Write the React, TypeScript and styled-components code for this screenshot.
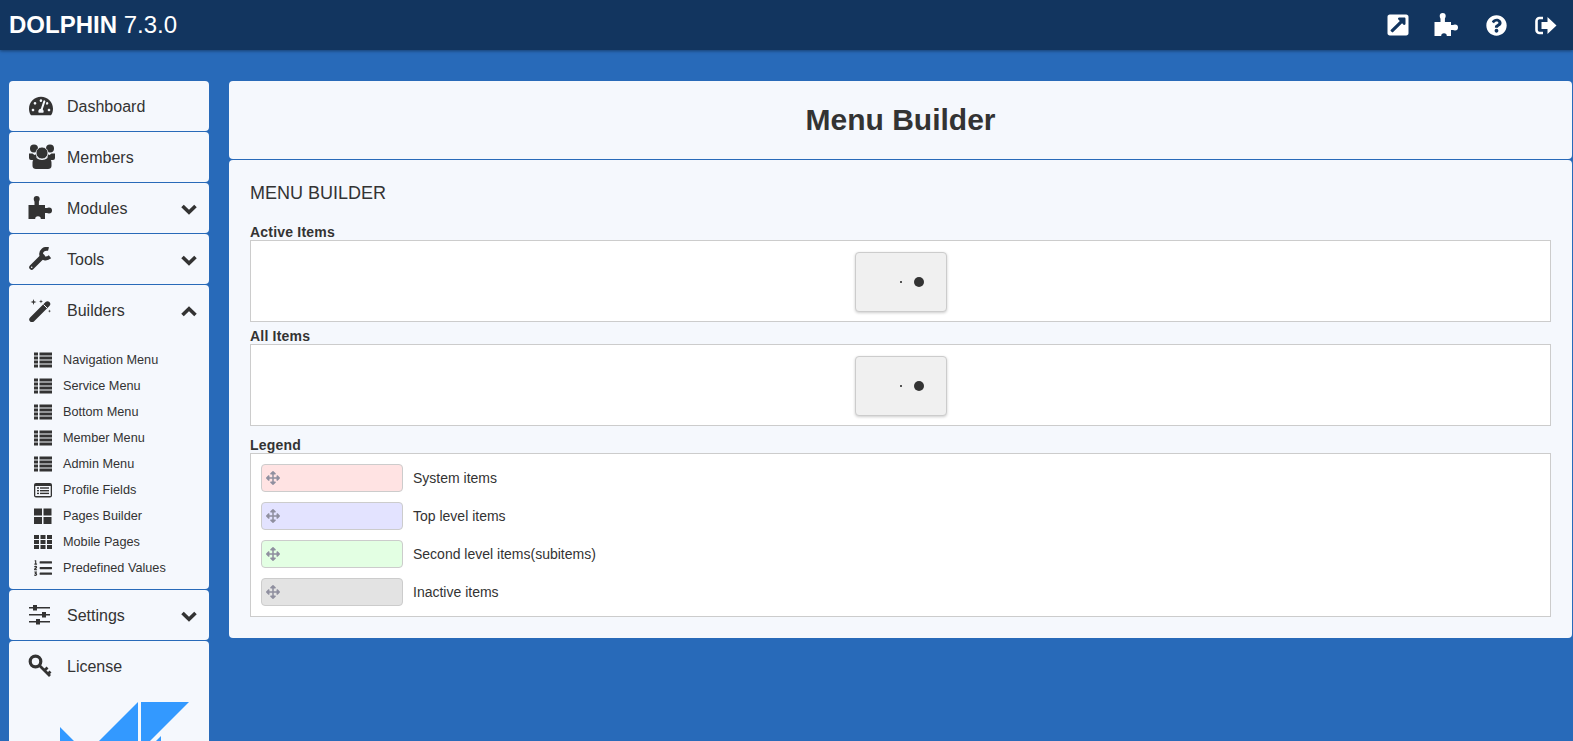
import { ReactNode } from 'react'
import styled, { createGlobalStyle } from 'styled-components'
import {
  FaArrowsAlt,
  FaExternalLinkSquareAlt,
  FaListOl,
  FaQuestionCircle,
  FaTachometerAlt,
} from 'react-icons/fa'

const GlobalStyle = createGlobalStyle`
  html, body {
    height: 741px;
    margin: 0;
    overflow: hidden;
  }
  body {
    background: #286ab9;
    color: #333;
    font-family: "Liberation Sans", Arial, sans-serif;
  }
`

const PuzzleIcon = () => (
  <svg width="24" height="24" viewBox="0 0 24 24" fill="currentColor">
    <circle cx="8.700" cy="3" r="3" />
    <circle cx="21" cy="14.500" r="3" />
    <path d="M6.500 4h4.400v5H17v3h3v5h-3v6h-4.200a2.800 2.800 0 0 0-5.600 0H.5V9h6z" />
  </svg>
)

const UsersIcon = () => (
  <svg width="28" height="26" viewBox="0 0 28 26" fill="currentColor">
    <circle cx="6" cy="4.500" r="4" />
    <circle cx="22" cy="4.500" r="4" />
    <path d="M1 9.500h3.500l2 1.500 2-1v6H3a2 2 0 0 1-2-2zM27 9.500h-3.500l-2 1.500-2-1v6h5.500a2 2 0 0 0 2-2z" />
    <circle cx="14" cy="9" r="6" stroke="#f5f8fd" strokeWidth=".8" />
    <path d="M8.500 14c3 2.500 8 2.500 11 0 2.500.5 4 2 4 4.500v3.500c0 2-1.500 3-3.500 3H8c-2 0-3.500-1-3.500-3v-3.500c0-2.500 1.500-4 4-4.500z" />
  </svg>
)

const WrenchIcon = () => (
  <svg width="24" height="24" viewBox="0 0 24 24" fill="none" stroke="currentColor">
    <path d="M20.500 2C16 .9 12.500 4 13.200 8c.7 3.500 5 4.800 8.800 1.800" strokeWidth="3.800" />
    <path d="M14.500 9.500 3.700 20.300" strokeWidth="5" strokeLinecap="round" />
    <circle cx="3.700" cy="20.300" r=".8" fill="#f5f8fd" stroke="none" />
  </svg>
)

const MagicIcon = () => (
  <svg width="24" height="24" viewBox="0 0 24 24" fill="currentColor">
    <path d="M4 21.500 19.500 6" stroke="currentColor" strokeWidth="5.400" strokeLinecap="round" />
    <path d="M15.500 6.500l3.500 3.500" stroke="#f5f8fd" strokeWidth="1" />
    <path d="M5.500 1l.7 2.300 2.300.7-2.300.7-.7 2.300-.7-2.300L2.500 4l2.300-.7zM13 1.500l.5 1.500 1.500.5-1.500.5-.5 1.500-.5-1.500-1.500-.5 1.500-.5zM21.500 11.500l.4 1.200 1.200.4-1.200.4-.4 1.200-.4-1.200-1.200-.4 1.200-.4z" />
  </svg>
)

const KeyIcon = () => (
  <svg width="24" height="24" viewBox="0 0 24 24" fill="none" stroke="currentColor">
    <circle cx="7.500" cy="7.500" r="5.300" strokeWidth="3.200" />
    <path d="M11.500 11.500 22 22M16.500 16.500l3-3M20 20l2.500-2.500" strokeWidth="2.800" />
  </svg>
)

const SlidersIcon = () => (
  <svg width="24" height="24" viewBox="0 0 24 24" fill="currentColor">
    <rect x="1" y="4" width="21" height="1.500" />
    <rect x="1" y="11" width="21" height="1.500" />
    <rect x="1" y="18" width="21" height="1.500" />
    <rect x="5" y="2" width="4" height="5.500" />
    <rect x="14" y="9" width="4" height="5.500" />
    <rect x="8" y="16" width="4" height="5.500" />
  </svg>
)

const ChevronIcon = ({ up }: { up?: boolean }) => (
  <svg width="16" height="11" viewBox="0 0 16 11" fill="none" stroke="currentColor" strokeWidth="3.600">
    <path d={up ? 'M1.500 9 8 2.700 14.500 9' : 'M1.500 2 8 8.300 14.500 2'} />
  </svg>
)

const SignOutIcon = () => (
  <svg width="22" height="19" viewBox="0 0 22 19" fill="currentColor">
    <path d="M8 2H4.500A3 3 0 0 0 1.500 5v9a3 3 0 0 0 3 3H8" fill="none" stroke="currentColor" strokeWidth="2.600" />
    <path d="M12.500 1 21.500 9.500 12.500 18V13H6.500V6h6z" />
  </svg>
)

const ListIcon = () => (
  <svg width="18" height="18" viewBox="0 0 18 18" fill="currentColor">
    {[1.500, 5.500, 9.500, 13.500].map(y => (
      <g key={y}>
        <rect x="0" y={y} width="4" height="3" />
        <rect x="5.500" y={y} width="12.500" height="3" />
      </g>
    ))}
  </svg>
)

const ListAltIcon = () => (
  <svg width="18" height="18" viewBox="0 0 18 18" fill="currentColor">
    <rect x="0" y="2" width="18" height="14.500" rx="2" />
    <rect x="1.300" y="5" width="15.400" height="10" fill="#f5f8fd" />
    {[6.300, 9, 11.700].map(y => (
      <g key={y}>
        <rect x="3" y={y} width="2" height="1.400" />
        <rect x="6" y={y} width="9" height="1.400" />
      </g>
    ))}
  </svg>
)

const ThLargeIcon = () => (
  <svg width="18" height="18" viewBox="0 0 18 18" fill="currentColor">
    <rect x="0" y="1.500" width="8" height="7" />
    <rect x="9.500" y="1.500" width="8" height="7" />
    <rect x="0" y="10" width="8" height="7" />
    <rect x="9.500" y="10" width="8" height="7" />
  </svg>
)

const ThIcon = () => (
  <svg width="18" height="18" viewBox="0 0 18 18" fill="currentColor">
    {[2, 7, 12].map(y =>
      [0, 6.500, 13].map(x => <rect key={`${x}-${y}`} x={x} y={y} width="5" height="4" />),
    )}
  </svg>
)

const subItems: [ReactNode, string][] = [
  [<ListIcon />, 'Navigation Menu'],
  [<ListIcon />, 'Service Menu'],
  [<ListIcon />, 'Bottom Menu'],
  [<ListIcon />, 'Member Menu'],
  [<ListIcon />, 'Admin Menu'],
  [<ListAltIcon />, 'Profile Fields'],
  [<ThLargeIcon />, 'Pages Builder'],
  [<ThIcon />, 'Mobile Pages'],
  [<FaListOl />, 'Predefined Values'],
]

const legend = [
  { color: '#ffe3e3', label: 'System items' },
  { color: '#e3e3ff', label: 'Top level items' },
  { color: '#e3ffe3', label: 'Second level items(subitems)' },
  { color: '#e3e3e3', label: 'Inactive items' },
]

const Loader = () => (
  <LoadButton>
    <svg width="40" height="12" viewBox="0 0 40 12">
      <circle cx="20" cy="6" r="1" fill="#222" />
      <circle cx="38" cy="6" r="5" fill="#333" />
    </svg>
  </LoadButton>
)

const App = () => (
  <>
    <GlobalStyle />
    <Header>
      <Brand><b>DOLPHIN</b> 7.3.0</Brand>
      <HeaderIcons>
        <HeaderIcon $size={24} $width={46}><FaExternalLinkSquareAlt /></HeaderIcon>
        <HeaderIcon $size={24}><PuzzleIcon /></HeaderIcon>
        <HeaderIcon $size={21}><FaQuestionCircle /></HeaderIcon>
        <HeaderIcon $size={24}><SignOutIcon /></HeaderIcon>
      </HeaderIcons>
    </Header>
    <Page>
      <Sidebar>
        <NavCard>
          <NavRow><NavIcon><DashboardIcon /></NavIcon>Dashboard</NavRow>
        </NavCard>
        <NavCard>
          <NavRow><NavIcon><UsersIcon /></NavIcon>Members</NavRow>
        </NavCard>
        <NavCard>
          <NavRow><NavIcon><PuzzleIcon /></NavIcon>Modules<Chevron><ChevronIcon /></Chevron></NavRow>
        </NavCard>
        <NavCard>
          <NavRow><NavIcon><WrenchIcon /></NavIcon>Tools<Chevron><ChevronIcon /></Chevron></NavRow>
        </NavCard>
        <NavCard>
          <NavRow><NavIcon><MagicIcon /></NavIcon>Builders<Chevron><ChevronIcon up /></Chevron></NavRow>
          <SubList>
            {subItems.map(([icon, label]) => (
              <SubItem key={label}><SubIcon>{icon}</SubIcon>{label}</SubItem>
            ))}
          </SubList>
        </NavCard>
        <NavCard>
          <NavRow><NavIcon><SlidersIcon /></NavIcon>Settings<Chevron><ChevronIcon /></Chevron></NavRow>
        </NavCard>
        <NavCard>
          <NavRow><NavIcon><KeyIcon /></NavIcon>License</NavRow>
          <Logo viewBox="0 0 130 60">
            <path d="M0 25 26.500 51.500 78 0V60H0Z" fill="#3399ff" />
            <path d="M81 0H129L81 48Z" fill="#3399ff" />
            <path d="M101 34V45H90Z" fill="#3399ff" />
          </Logo>
        </NavCard>
      </Sidebar>
      <Main>
        <TitleCard>Menu Builder</TitleCard>
        <ContentCard>
          <Heading>MENU BUILDER</Heading>
          <FieldLabel>Active Items</FieldLabel>
          <ItemsBox><Loader /></ItemsBox>
          <FieldLabel $gap={6}>All Items</FieldLabel>
          <ItemsBox><Loader /></ItemsBox>
          <FieldLabel $gap={11}>Legend</FieldLabel>
          <LegendBox>
            {legend.map(item => (
              <LegendRow key={item.label}>
                <Swatch $color={item.color}><FaArrowsAlt /></Swatch>
                {item.label}
              </LegendRow>
            ))}
          </LegendBox>
        </ContentCard>
      </Main>
    </Page>
  </>
)

const DashboardIcon = styled(FaTachometerAlt)`
  margin-left: 1px;
`

const Header = styled.header`
  align-items: center;
  background: #12355f;
  box-shadow: 0 1px 3px rgba(0, 0, 0, 0.4);
  color: #fff;
  display: flex;
  height: 50px;
  justify-content: space-between;
  padding: 0 2px 0 9px;
`

const Brand = styled.div`
  font-size: 24px;
  b {
    font-weight: 700;
  }
`

const HeaderIcons = styled.div`
  display: flex;
`

const HeaderIcon = styled.span<{ $size: number; $width?: number }>`
  align-items: center;
  display: flex;
  font-size: ${p => p.$size}px;
  height: 24px;
  justify-content: center;
  width: ${p => p.$width ?? 50}px;
`

const Page = styled.div`
  align-items: flex-start;
  column-gap: 20px;
  display: grid;
  grid-template-columns: 200px 1fr;
  padding: 31px 1px 0 9px;
`

const Sidebar = styled.nav`
  display: flex;
  flex-direction: column;
  row-gap: 1px;
`

const NavCard = styled.div`
  background: #f5f8fd;
  border-radius: 4px;
`

const NavRow = styled.div`
  align-items: center;
  box-sizing: border-box;
  display: flex;
  font-size: 16px;
  height: 50px;
  padding: 2px 12px 0 19px;
`

const NavIcon = styled.span`
  display: flex;
  font-size: 24px;
  margin-top: -2px;
  width: 39px;
`

const Chevron = styled.span`
  display: flex;
  margin-left: auto;
`

const SubList = styled.div`
  display: flex;
  flex-direction: column;
  padding: 12px 0 8px 25px;
`

const SubItem = styled.div`
  align-items: center;
  display: flex;
  font-size: 12.7px;
  height: 26px;
`

const SubIcon = styled.span`
  display: flex;
  font-size: 18px;
  width: 29px;
`

const Logo = styled.svg`
  display: block;
  height: 60px;
  margin: 11px 0 0 51px;
  width: 130px;
`

const Main = styled.main`
  display: flex;
  flex-direction: column;
  row-gap: 1px;
`

const TitleCard = styled.h1`
  background: #f5f8fd;
  border-radius: 4px;
  font-size: 30px;
  font-weight: 700;
  height: 78px;
  line-height: 78px;
  margin: 0;
  text-align: center;
`

const ContentCard = styled.section`
  background: #f5f8fd;
  border-radius: 4px;
  display: flex;
  flex-direction: column;
  padding: 21px;
`

const Heading = styled.h2`
  font-size: 18px;
  font-weight: 400;
  line-height: 24px;
  margin: 0 0 19px;
`

const FieldLabel = styled.div<{ $gap?: number }>`
  font-size: 14px;
  font-weight: 700;
  letter-spacing: 0.2px;
  line-height: 16px;
  margin-top: ${p => p.$gap ?? 0}px;
`

const ItemsBox = styled.div`
  background: #fff;
  border: 1px solid #ccc;
  box-sizing: border-box;
  display: flex;
  height: 82px;
  justify-content: center;
  padding-top: 11px;
`

const LoadButton = styled.div`
  align-items: center;
  background: #f0f0f0;
  border: 1px solid #ccc;
  border-radius: 4px;
  box-shadow: 0 1px 3px rgba(0, 0, 0, 0.2);
  box-sizing: border-box;
  display: flex;
  height: 60px;
  justify-content: center;
  width: 92px;
  svg {
    overflow: visible;
  }
`

const LegendBox = styled.div`
  background: #fff;
  border: 1px solid #ccc;
  display: flex;
  flex-direction: column;
  padding: 10px;
  row-gap: 10px;
`

const LegendRow = styled.div`
  align-items: center;
  column-gap: 10px;
  display: flex;
  font-size: 14px;
`

const Swatch = styled.div<{ $color: string }>`
  align-items: center;
  background: ${p => p.$color};
  border: 1px solid #ccc;
  border-radius: 4px;
  box-sizing: border-box;
  color: #8f8f9f;
  display: flex;
  font-size: 14px;
  height: 28px;
  padding-left: 4px;
  width: 142px;
`

export default App
